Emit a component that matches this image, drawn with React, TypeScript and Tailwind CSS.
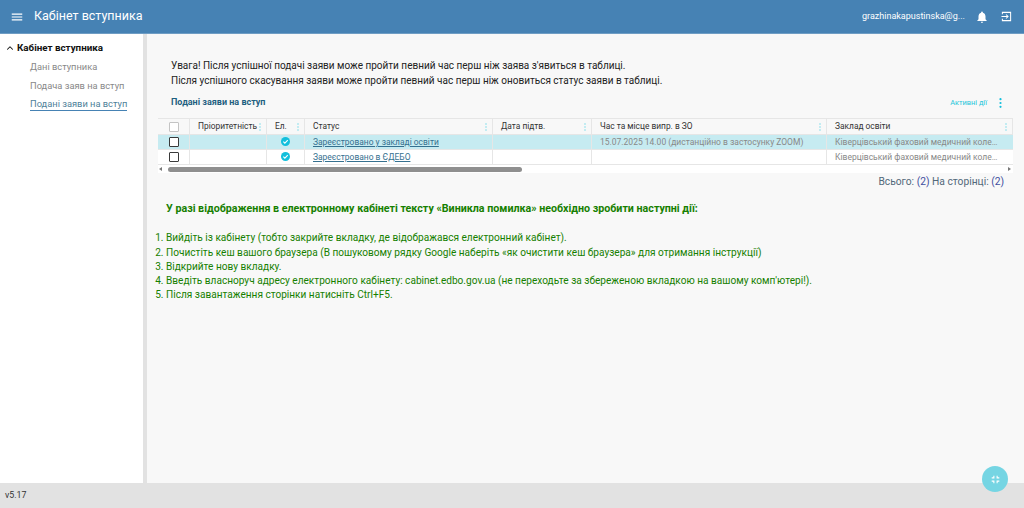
import React from "react";
import { ChevronUp } from "lucide-react";
import { MdMenu, MdNotifications, MdFullscreenExit } from "react-icons/md";

function Dots() {
  return (
    <svg width="2" height="8" viewBox="0 0 2 8" className="block shrink-0" fill="#80deea">
      <circle cx="1" cy="1" r="0.8" />
      <circle cx="1" cy="4" r="0.8" />
      <circle cx="1" cy="7" r="0.8" />
    </svg>
  );
}

function Check() {
  return (
    <svg width="9" height="9" viewBox="0 0 10 10" className="block">
      <circle cx="5" cy="5" r="5" fill="#12bfdc" />
      <path d="M2.6 5.1 L4.3 6.8 L7.5 3.6" stroke="#fff" strokeWidth="1.2" fill="none" />
    </svg>
  );
}

function Box({ light = false }: { light?: boolean }) {
  return (
    <span className={"block w-[10px] h-[10px] border-[1.5px] rounded-[1px] bg-white " + (light ? "border-[#c4c4c4]" : "border-[#3a3a3a]")} />
  );
}

const cols = "grid grid-cols-[32px_77px_38px_188px_99px_235px_186px]";
const cell = "border-r border-[#e6e6e6] flex items-center min-w-0";

function Header() {
  const h = "flex items-center justify-between pl-[8px] pr-[5px] text-[8.4px] text-[#333] " + cell;
  return (
    <div className={cols + " h-[17px] bg-[#f8f8f8] border-y border-[#e6e6e6]"}>
      <div className={cell + " justify-center"}><Box light /></div>
      <div className={h}><span>Пріоритетність</span><Dots /></div>
      <div className={h}><span>Ел.</span><Dots /></div>
      <div className={h}><span>Статус</span><Dots /></div>
      <div className={h}><span>Дата підтв.</span><Dots /></div>
      <div className={h}><span>Час та місце випр. в ЗО</span><Dots /></div>
      <div className={h}><span>Заклад освіти</span><Dots /></div>
    </div>
  );
}

function Row({ status, time, active }: { status: string; time: string; active?: boolean }) {
  const t = "pl-[8px] text-[8.5px] text-[#888] whitespace-nowrap overflow-hidden " + cell;
  return (
    <div className={cols + " h-[15px] border-b border-[#e6e6e6] " + (active ? "bg-[#c6ebf1]" : "bg-white")}>
      <div className={cell + " justify-center"}><Box /></div>
      <div className={cell} />
      <div className={cell + " justify-center pb-[2px]"}><Check /></div>
      <div className={cell + " pl-[8px] text-[8.45px] text-[#35708f] underline"}>{status}</div>
      <div className={cell} />
      <div className={t}>{time}</div>
      <div className={t + " border-r-0 pr-[11px]"}><span className="truncate">Ківерцівський фаховий медичний коледж Волинської обласної ради</span></div>
    </div>
  );
}

export default function App() {
  return (
    <div className="w-[1024px] h-[508px] flex flex-col overflow-hidden bg-[#f8f8f8] relative font-['Roboto',sans-serif]">
      <header className="h-[34px] shrink-0 bg-[#4682b4] border-b border-[#6f9dc4] flex items-center pl-[10px] pr-[12px] text-white">
        <MdMenu className="w-[14px] h-[14px]" />
        <h1 className="ml-[10px] text-[12.5px]">Кабінет вступника</h1>
        <span className="ml-auto text-[9px] w-[103px] whitespace-nowrap overflow-hidden">grazhinakapustinska@g...</span>
        <MdNotifications className="ml-[10px] w-[14px] h-[14px]" />
        <svg className="ml-[12px]" width="11" height="11" viewBox="0 0 12 12" fill="none" stroke="white" strokeWidth="1.1">
          <path d="M1.5 3.5 V1.5 H10.5 V10.5 H1.5 V8.5" />
          <path d="M0.5 6 H7.5 M5.5 3.8 L7.7 6 L5.5 8.2" />
        </svg>
      </header>

      <div className="flex-1 flex min-h-0">
        <aside className="w-[147px] shrink-0 bg-white border-r-[4px] border-[#e2e2e2] pt-[6px]">
          <div className="flex items-center h-[16px] pl-[5px] text-[9.8px] font-bold text-[#111]">
            <ChevronUp className="w-[10px] h-[10px] mr-[2px]" strokeWidth={2.5} />
            <span>Кабінет вступника</span>
          </div>
          <div className="pl-[30px] text-[9.3px] text-[#888]">
            <div className="mt-[3px] h-[16px] flex items-center">Дані вступника</div>
            <div className="mt-[2.6px] h-[16px] flex items-center">Подача заяв на вступ</div>
            <div className="mt-[2.6px] h-[16px] flex items-center">
              <span className="text-[#4f7f99] border-b border-[#4682b4] leading-[13px]">Подані заяви на вступ</span>
            </div>
          </div>
        </aside>

        <main className="flex-1 min-w-0 pt-[25px]">
          <div className="pl-[24px] text-[10px] leading-[14.5px] text-[#222]">
            <p>Увага! Після успішної подачі заяви може пройти певний час перш ніж заява з'явиться в таблиці.</p>
            <p>Після успішного скасування заяви може пройти певний час перш ніж оновиться статус заяви в таблиці.</p>
          </div>
          <div className="flex items-center justify-between pl-[24px] pr-[22px] mt-[7px] h-[16px]">
            <span className="text-[9px] font-bold text-[#1f5f80]">Подані заяви на вступ</span>
            <div className="flex items-center gap-[12px] text-[7.4px] text-[#26c6da]">
              <span>Активні дії</span>
              <svg width="3" height="10" viewBox="0 0 3 10" fill="#12bfdc" className="block">
                <circle cx="1.5" cy="1.2" r="1.1" />
                <circle cx="1.5" cy="5" r="1.1" />
                <circle cx="1.5" cy="8.8" r="1.1" />
              </svg>
            </div>
          </div>
          <div className="ml-[11px] mt-[7px] w-[855px]">
            <Header />
            <Row active status="Зареєстровано у закладі освіти" time="15.07.2025 14.00 (дистанційно в застосунку ZOOM)" />
            <Row status="Зареєстровано в ЄДЕБО" time="" />
            <div className="h-[8px] flex items-center bg-white px-[1px] text-[#777]">
              <span className="w-0 h-0 border-y-[2.5px] border-y-transparent border-r-[3px] border-r-[#777]" />
              <div className="ml-[6px] w-[354px] h-[5px] rounded-full bg-[#8f8f8f]" />
              <span className="ml-auto mr-[1px] w-0 h-0 border-y-[2.5px] border-y-transparent border-l-[3px] border-l-[#777]" />
            </div>
          </div>
          <div className="mt-[2px] pr-[20px] text-right text-[10.25px] leading-[14px] text-[#52697a]">
            Всього: <span className="text-[#3f4f9f]">(2)</span> На сторінці: <span className="text-[#3f4f9f]">(2)</span>
          </div>
          <p className="mt-[13px] pl-[19px] text-[10.7px] leading-[14px] font-bold text-[#168000]">
            У разі відображення в електронному кабінеті тексту «Виникла помилка» необхідно зробити наступні дії:
          </p>
          <ol className="mt-[15.4px] pl-[19px] list-decimal text-[10.1px] leading-[14.25px] text-[#168000]">
            <li>Вийдіть із кабінету (тобто закрийте вкладку, де відображався електронний кабінет).</li>
            <li>Почистіть кеш вашого браузера (В пошуковому рядку Google наберіть «як очистити кеш браузера» для отримання інструкції)</li>
            <li>Відкрийте нову вкладку.</li>
            <li>Введіть власноруч адресу електронного кабінету: cabinet.edbo.gov.ua (не переходьте за збереженою вкладкою на вашому комп'ютері!).</li>
            <li>Після завантаження сторінки натисніть Ctrl+F5.</li>
          </ol>
        </main>
      </div>

      <footer className="h-[25px] shrink-0 bg-[#e2e2e2] flex items-center pl-[5px] text-[8.8px] text-[#333]">v5.17</footer>
      <button className="absolute left-[982px] top-[466px] w-[26px] h-[26px] rounded-full bg-[#75d5e3] flex items-center justify-center text-white">
        <MdFullscreenExit className="w-[13px] h-[13px]" />
      </button>
    </div>
  );
}
